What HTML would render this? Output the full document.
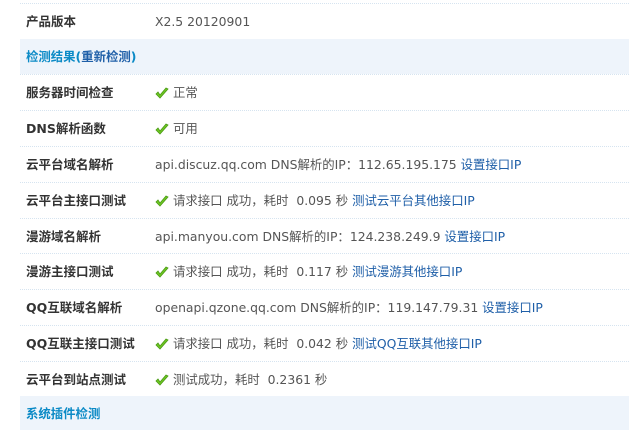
<!DOCTYPE html>
<html><head><meta charset="utf-8"><style>
body{margin:0;width:629px;height:430px;overflow:hidden;background:#fff;font-family:"DejaVu Sans","Noto Sans CJK SC",sans-serif;font-size:12.4px;color:#444}
.r{position:absolute;left:20px;width:609px;height:35px;border-top:1px dotted #d6e4f0;line-height:35px}
.h{background:#eef4fb;border-top:none}
.h b{color:#0b8ac6;margin-left:6px}
.l{position:absolute;left:6px;font-weight:bold;color:#333;font-size:12.5px}
.v{position:absolute;left:135px;color:#555;white-space:nowrap}
a{color:#1f5fa8;text-decoration:none}
.ck{display:inline-block;width:14px;height:12px;vertical-align:-2px;margin-right:4px}
</style></head><body>
<svg width="0" height="0" style="position:absolute"><defs><symbol id="c" viewBox="0 0 14 12"><path d="M1 7 L5 11 L13 2 L11 1 L5 8 L3 5 Z" fill="#6ec623" stroke="#4a9a14" stroke-width="0.8"/></symbol></defs></svg>
<div class="r" style="top:3px"><span class="l">产品版本</span><span class="v">X2.5 20120901</span></div>
<div class="r h" style="top:39px"><b>检测结果(<span style="color:#1f5fa8">重新检测</span>)</b></div>
<div class="r" style="top:74px"><span class="l">服务器时间检查</span><span class="v"><svg class="ck"><use href="#c"/></svg>正常</span></div>
<div class="r" style="top:110px"><span class="l">DNS解析函数</span><span class="v"><svg class="ck"><use href="#c"/></svg>可用</span></div>
<div class="r" style="top:146px"><span class="l">云平台域名解析</span><span class="v">api.discuz.qq.com DNS解析的IP：112.65.195.175 <a>设置接口IP</a></span></div>
<div class="r" style="top:182px"><span class="l">云平台主接口测试</span><span class="v"><svg class="ck"><use href="#c"/></svg>请求接口 成功，耗时 &nbsp;0.095 秒 <a>测试云平台其他接口IP</a></span></div>
<div class="r" style="top:218px"><span class="l">漫游域名解析</span><span class="v">api.manyou.com DNS解析的IP：124.238.249.9 <a>设置接口IP</a></span></div>
<div class="r" style="top:253px"><span class="l">漫游主接口测试</span><span class="v"><svg class="ck"><use href="#c"/></svg>请求接口 成功，耗时 &nbsp;0.117 秒 <a>测试漫游其他接口IP</a></span></div>
<div class="r" style="top:289px"><span class="l">QQ互联域名解析</span><span class="v">openapi.qzone.qq.com DNS解析的IP：119.147.79.31 <a>设置接口IP</a></span></div>
<div class="r" style="top:325px"><span class="l">QQ互联主接口测试</span><span class="v"><svg class="ck"><use href="#c"/></svg>请求接口 成功，耗时 &nbsp;0.042 秒 <a>测试QQ互联其他接口IP</a></span></div>
<div class="r" style="top:361px"><span class="l">云平台到站点测试</span><span class="v"><svg class="ck"><use href="#c"/></svg>测试成功，耗时 &nbsp;0.2361 秒</span></div>
<div class="r h" style="top:396px;height:34px"><b>系统插件检测</b></div>
</body></html>
